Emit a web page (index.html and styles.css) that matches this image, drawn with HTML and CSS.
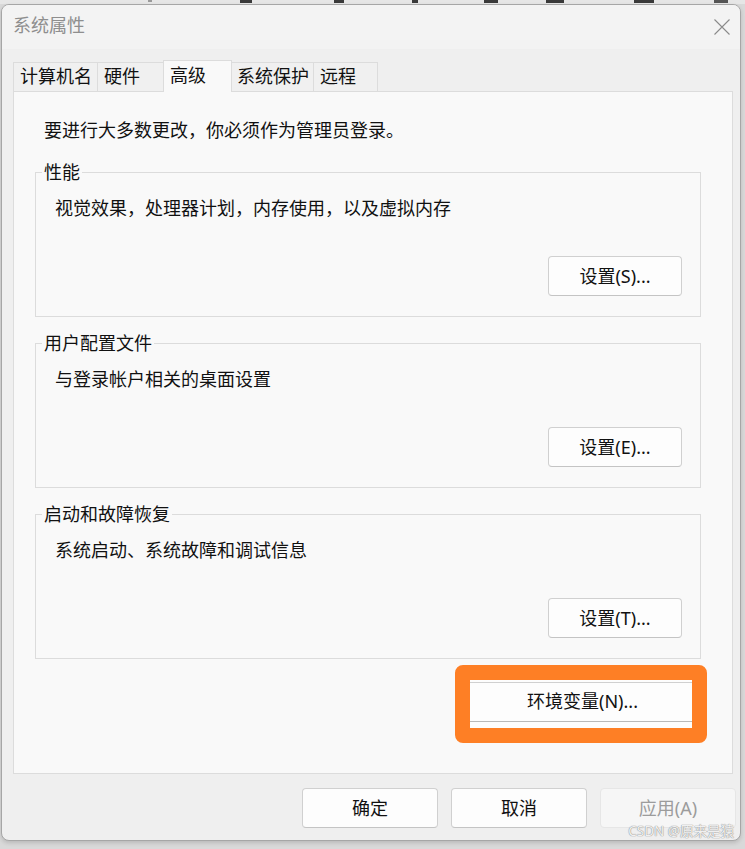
FILE: index.html
```html
<!DOCTYPE html>
<html lang="zh-CN">
<head>
<meta charset="utf-8">
<title>系统属性</title>
<link rel="stylesheet" href="styles.css">
</head>
<body>
<div class="desk-strip">
  <span class="mark m1"></span><span class="mark m2"></span><span class="mark m3"></span><span class="mark m4"></span><span class="mark m5"></span><span class="mark m6"></span><span class="mark m7"></span><span class="mark m8"></span>
</div>
<div class="window">
  <div class="titlebar">
    <span class="title">系统属性</span>
    <svg class="close" width="16" height="16" viewBox="0 0 16 16"><path d="M0.5 0.5L15.5 15.5M15.5 0.5L0.5 15.5" stroke="#8a8a8a" stroke-width="1.1" fill="none"/></svg>
  </div>
  <div class="content">
    <div class="tabs">
      <div class="tab">计算机名</div>
      <div class="tab">硬件</div>
      <div class="tab active">高级</div>
      <div class="tab">系统保护</div>
      <div class="tab">远程</div>
    </div>
    <div class="panel">
      <div class="intro">要进行大多数更改，你必须作为管理员登录。</div>
      <div class="group">
        <div class="group-title">性能</div>
        <div class="group-desc">视觉效果，处理器计划，内存使用，以及虚拟内存</div>
        <button class="btn group-btn">设置(S)...</button>
      </div>
      <div class="group">
        <div class="group-title">用户配置文件</div>
        <div class="group-desc">与登录帐户相关的桌面设置</div>
        <button class="btn group-btn">设置(E)...</button>
      </div>
      <div class="group">
        <div class="group-title">启动和故障恢复</div>
        <div class="group-desc">系统启动、系统故障和调试信息</div>
        <button class="btn group-btn">设置(T)...</button>
      </div>
      <div class="highlight">
        <div class="env-btn">环境变量(N)...</div>
      </div>
    </div>
    <div class="footer">
      <button class="btn foot-btn">确定</button>
      <button class="btn foot-btn">取消</button>
      <button class="btn foot-btn disabled">应用(A)</button>
    </div>
  </div>
  <div class="watermark">CSDN @原来是猿</div>
</div>
</body>
</html>
```
FILE: styles.css
```css
html, body {
  margin: 0;
  padding: 0;
}
body {
  width: 745px;
  height: 849px;
  overflow: hidden;
  background: #d9d9d9;
  font-family: "Noto Sans", "Noto Sans CJK SC", sans-serif;
  font-size: 18px;
  color: #111;
}
.desk-strip {
  height: 4px;
  background: #e6e6e6;
  display: flex;
  align-items: flex-start;
}
.mark {
  display: block;
  height: 3px;
  background: #3a3a3a;
}
.m1 { margin-left: 148px; width: 4px; height: 2px; background: #9a9a9a; }
.m2 { margin-left: 88px; width: 12px; }
.m3 { margin-left: 82px; width: 10px; }
.m4 { margin-left: 68px; width: 6px; }
.m5 { margin-left: 66px; width: 14px; }
.m6 { margin-left: 48px; width: 18px; }
.m7 { margin-left: 70px; width: 20px; }
.m8 { margin-left: 60px; width: 14px; background: #555; }

.window {
  position: relative;
  box-sizing: border-box;
  margin-left: 1px;
  width: 740px;
  height: 837px;
  border: 1px solid #a6a6a6;
  border-radius: 8px;
  background: #efefef;
  overflow: hidden;
  box-shadow: 0 2px 4px rgba(0,0,0,0.15);
}
.titlebar {
  height: 44px;
  background: #f3f3f3;
  display: flex;
  align-items: center;
  justify-content: space-between;
  padding: 0 10px 0 11px;
}
.title {
  color: #8e8e8e;
  font-size: 18px;
  line-height: 24px;
  margin-top: -4px;
}
.close {
  display: block;
  margin-top: -1px;
}
.content {
  padding-left: 11px;
}
.tabs {
  margin-top: 11px;
  height: 31px;
  display: flex;
  align-items: flex-end;
}
.tab {
  box-sizing: border-box;
  height: 29px;
  line-height: 27px;
  padding-left: 6px;
  border: 1px solid #dcdcdc;
  border-bottom: none;
  margin-left: -1px;
  background: #f0f0f0;
  white-space: nowrap;
}
.tab:first-child { margin-left: 0; width: 85px; }
.tab:nth-child(2) { width: 67px; }
.tab:nth-child(3) { width: 69px; }
.tab:nth-child(4) { width: 83px; padding-left: 5px; }
.tab:nth-child(5) { width: 65px; }
.tab.active {
  position: relative;
  z-index: 1;
  height: 32px;
  margin-bottom: -1px;
  line-height: 29px;
  background: #f9f9f9;
}
.panel {
  box-sizing: border-box;
  width: 720px;
  height: 683px;
  border: 1px solid #dcdcdc;
  background: #f9f9f9;
  padding: 26px 0 0 21px;
  display: flex;
  flex-direction: column;
}
.intro {
  line-height: 24px;
  padding-left: 9px;
}
.group {
  box-sizing: border-box;
  width: 666px;
  height: 145px;
  margin-top: 26px;
  border: 1px solid #dcdcdc;
  display: flex;
  flex-direction: column;
}
.intro + .group {
  margin-top: 30px;
}
.group-title {
  align-self: flex-start;
  margin: -13px 0 0 6px;
  padding: 0 2px;
  line-height: 24px;
  background: #f9f9f9;
}
.group-desc {
  margin-top: 12px;
  padding-left: 19px;
  line-height: 24px;
}
.btn {
  box-sizing: border-box;
  height: 40px;
  border: 1px solid #d0d0d0;
  border-bottom-color: #c4c4c4;
  border-radius: 4px;
  background: #fdfdfd;
  font-family: "Noto Sans", "Noto Sans CJK SC", sans-serif;
  font-size: 18px;
  color: #111;
  padding: 0;
  line-height: 36px;
}
.group-btn {
  width: 134px;
  margin: auto 18px 20px 0;
  align-self: flex-end;
}
.highlight {
  box-sizing: border-box;
  align-self: flex-end;
  width: 252px;
  height: 78px;
  margin: 6px 25px 0 0;
  border: 15px solid #fe7f25;
  border-radius: 8px;
  background: #fdfdfd;
}
.env-btn {
  box-sizing: border-box;
  height: 40px;
  margin-top: 2px;
  border-top: 1px solid #d0d0d0;
  border-bottom: 1px solid #b9b9b9;
  text-align: center;
  line-height: 37px;
  padding-left: 3px;
}
.footer {
  display: flex;
  justify-content: flex-end;
  gap: 13px;
  margin-top: 14px;
  padding-right: 4px;
}
.foot-btn {
  width: 136px;
}
.foot-btn.disabled {
  background: #f6f6f6;
  border-color: #e6e6e6;
  color: #9c9c9c;
}
.watermark {
  position: absolute;
  right: 6px;
  bottom: 0;
  font-size: 13.5px;
  line-height: 18px;
  color: rgba(255,255,255,0.9);
  text-shadow: 0 0 1px #8a8a8a, 0 0 1px #8a8a8a;
}
```
